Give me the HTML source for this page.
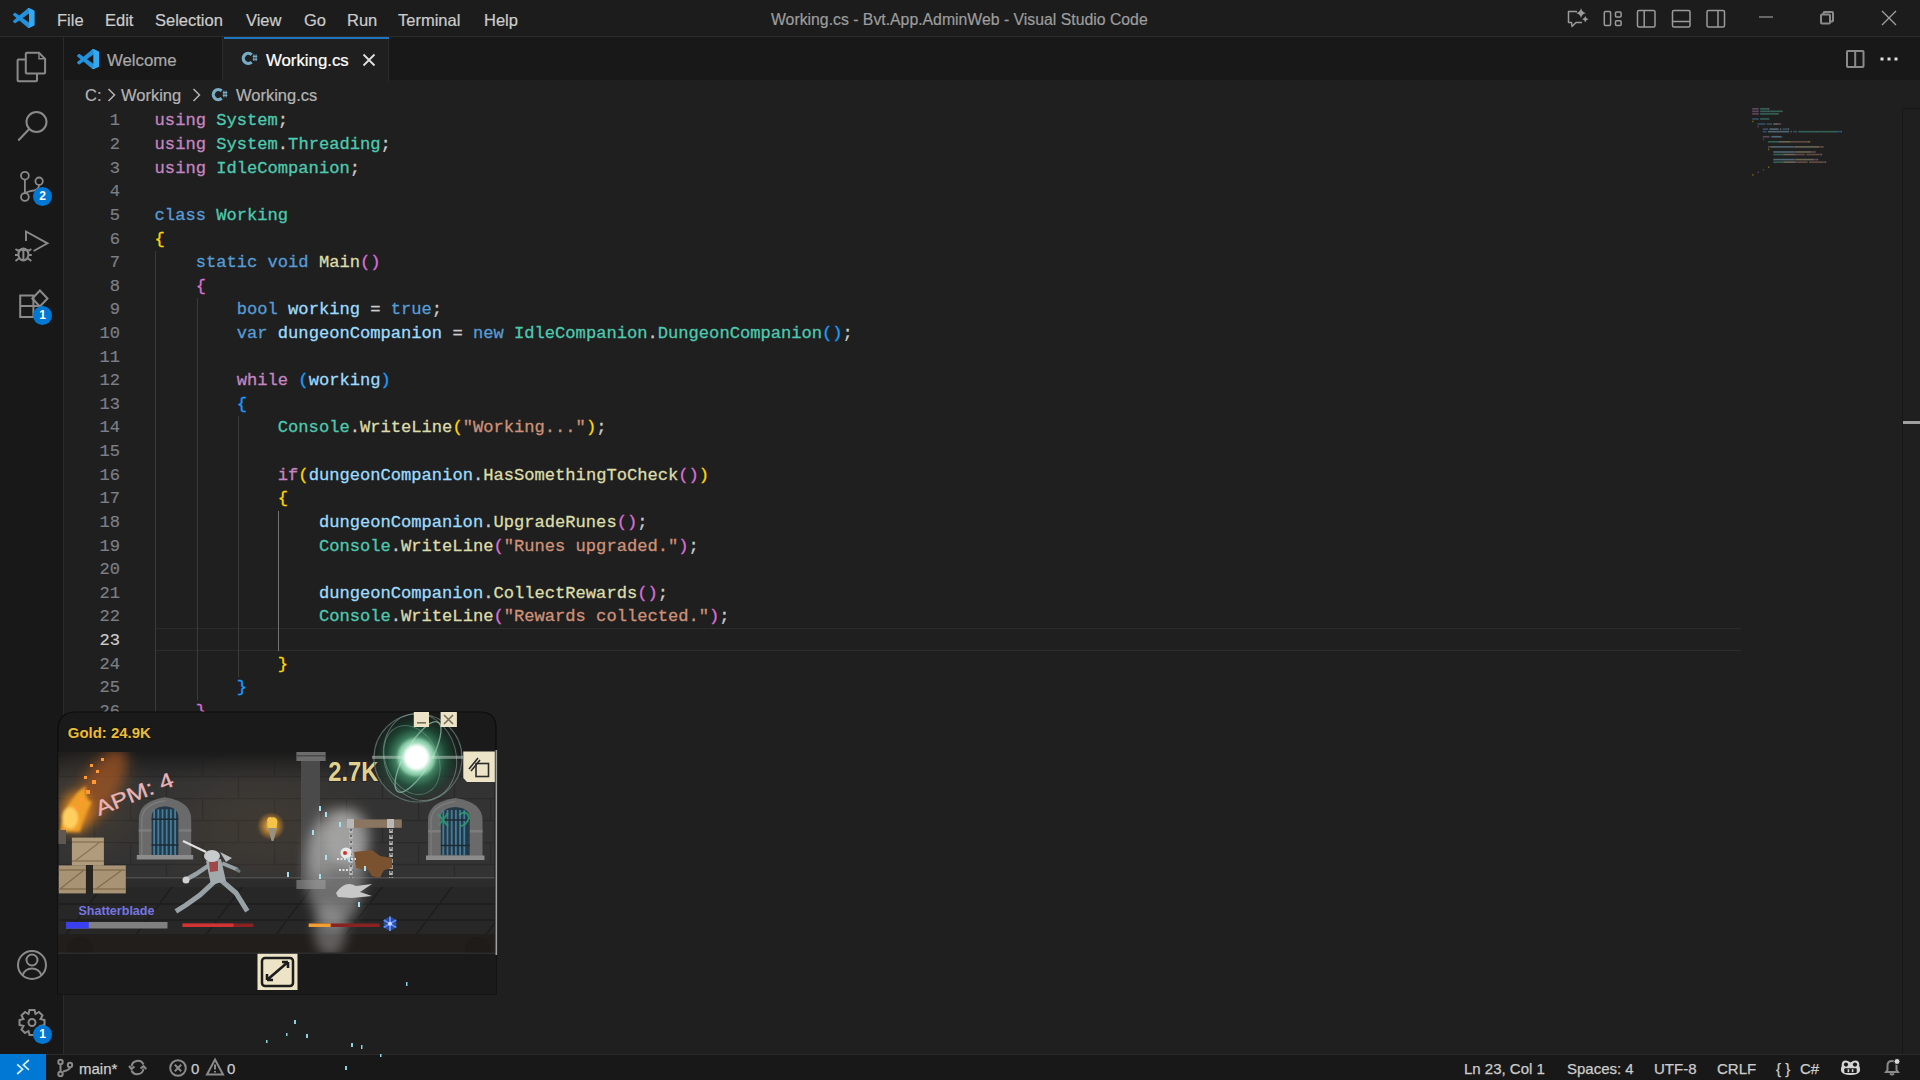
<!DOCTYPE html>
<html><head><meta charset="utf-8">
<style>
*{margin:0;padding:0;box-sizing:border-box}
html,body{width:1920px;height:1080px;overflow:hidden;background:#1f1f1f;font-family:"Liberation Sans",sans-serif;color:#cccccc}
.a{position:absolute}
svg{position:absolute;overflow:visible}
#title{left:0;top:0;width:1920px;height:37px;background:#1c1c1c;border-bottom:1px solid #2b2b2b}
.menu{position:absolute;top:10.5px;font-size:16.5px;color:#cccccc;white-space:pre;-webkit-text-stroke:0.2px currentColor}
#activity{left:0;top:37px;width:64px;height:1017px;background:#181818;border-right:1px solid #2b2b2b}
#tabs{left:64px;top:37px;width:1856px;height:44px;background:#181818;border-bottom:1px solid #2b2b2b}
#editor{left:64px;top:80px;width:1856px;height:974px;background:#1f1f1f}
#status{left:0;top:1054px;width:1920px;height:26px;background:#181818;border-top:1px solid #2b2b2b}
.code{position:absolute;left:154.6px;-webkit-text-stroke:0.3px currentColor;font-family:"Liberation Mono",monospace;font-size:17.11px;white-space:pre;height:23.65px;line-height:23.65px}
.ln{position:absolute;left:70px;-webkit-text-stroke:0.2px currentColor;width:50px;text-align:right;font-family:"Liberation Mono",monospace;font-size:17.08px;color:#7c7f86;height:23.65px;line-height:23.65px}
.ln.cur{color:#cccccc}
.k{color:#569cd6}.c{color:#c586c0}.t{color:#4ec9b0}.f{color:#dcdcaa}.v{color:#9cdcfe}.s{color:#ce9178}.p{color:#cccccc}
.b1{color:#ffd700}.b2{color:#da70d6}.b3{color:#179fff}
.guide{position:absolute;width:1px;background:#3a3a3a}
.st{position:absolute;top:1060px;font-size:15px;color:#cccccc;white-space:pre;-webkit-text-stroke:0.25px currentColor}
.ic{stroke:#8a8a8a;fill:none;stroke-width:2}
.badge{position:absolute;width:19px;height:19px;border-radius:50%;background:#0078d4;color:#fff;font-size:12px;font-weight:bold;text-align:center;line-height:19px}
.tabt{position:absolute;font-size:16.8px;white-space:pre;-webkit-text-stroke:0.2px currentColor}
.bc{position:absolute;top:86px;font-size:16.5px;color:#b4b4b4;white-space:pre;-webkit-text-stroke:0.2px currentColor}
</style></head><body>
<div id="title" class="a"></div>
<div id="activity" class="a"></div>
<div id="tabs" class="a"></div>
<div id="editor" class="a"></div>
<div id="status" class="a"></div>

<!-- title bar -->
<svg style="left:13.3px;top:8.3px" width="21.4" height="20" viewBox="0 0 100 100" preserveAspectRatio="none"><path d="M96.46 10.8 L75.86 0.87 C73.47-0.28 70.62 0.2 68.75 2.08 L29.35 38.04 L12.19 25.02 C10.59 23.81 8.36 23.91 6.88 25.26 L1.37 30.27 C-0.45 31.92-0.45 34.78 1.36 36.43 L16.24 50 L1.36 63.57 C-0.45 65.22-0.45 68.08 1.37 69.73 L6.88 74.74 C8.36 76.09 10.59 76.19 12.19 74.98 L29.35 61.960 L68.75 97.92 C70.62 99.8 73.47 100.28 75.86 99.13 L96.46 89.2 C98.62 88.16 100 85.97 100 83.57 V16.43 C100 14.03 98.62 11.84 96.46 10.8 Z M75.02 72.7 L45.11 50 L75.02 27.3 V72.7 Z" fill="#2392dd"/><path d="M68.75 2.08 C70.62 0.2 73.47-0.28 75.86 0.87 L96.46 10.8 C98.62 11.84 100 14.03 100 16.43 V83.57 C100 85.97 98.62 88.16 96.46 89.2 L75.86 99.13 C73.47 100.28 70.62 99.8 68.75 97.92 L75.02 90 V10 Z" fill="#34a8f0"/></svg>
<span class="menu" style="left:57px">File</span>
<span class="menu" style="left:105px">Edit</span>
<span class="menu" style="left:155px">Selection</span>
<span class="menu" style="left:246px">View</span>
<span class="menu" style="left:304px">Go</span>
<span class="menu" style="left:347px">Run</span>
<span class="menu" style="left:398px">Terminal</span>
<span class="menu" style="left:484px">Help</span>
<span class="menu" style="left:771px;font-size:15.8px;color:#9d9d9d;top:10.5px">Working.cs - Bvt.App.AdminWeb - Visual Studio Code</span>
<!-- title right icons -->
<svg style="left:0;top:0" width="1" height="1" viewBox="0 0 1 1">
 <g stroke="#9a9a9a" fill="none" stroke-width="1.5" stroke-linejoin="round">
  <path d="M1577 11.5 H1568.5 V22.5 H1571.5 L1572 26.5 L1576 22.5 H1582"/>
  <rect x="1604.3" y="11.5" width="6.3" height="14" rx="1.2"/>
  <rect x="1615.5" y="12" width="5.6" height="5" rx="1"/>
  <rect x="1615.5" y="20.8" width="5.6" height="4.8" rx="1"/>
  <rect x="1637.5" y="10.5" width="17.5" height="16.5" rx="1.5"/><path d="M1644.2 10.5 V27"/>
  <rect x="1672.5" y="10.5" width="17.5" height="16.5" rx="1.5"/><path d="M1672.5 21.5 H1690"/>
  <rect x="1707" y="10.5" width="17.5" height="16.5" rx="1.5"/><path d="M1718 10.5 V27"/>
 </g>
 <path d="M1581 8 Q1581.8 12.2 1586 13.1 Q1581.8 14 1581 18.2 Q1580.2 14 1576 13.1 Q1580.2 12.2 1581 8 Z" fill="#9a9a9a"/>
 <path d="M1585.3 16 Q1585.8 18.7 1588.5 19.2 Q1585.8 19.7 1585.3 22.4 Q1584.8 19.7 1582.1 19.2 Q1584.8 18.7 1585.3 16 Z" fill="#9a9a9a"/>
</svg>
<svg style="left:1759px;top:16px" width="16" height="2" viewBox="0 0 16 2"><path d="M0 1 H14" stroke="#9a9a9a" stroke-width="1.2"/></svg>
<svg style="left:1820px;top:11px" width="14" height="14" viewBox="0 0 14 14" class="ic" stroke="#9a9a9a" stroke-width="1.2"><rect x="1" y="3.5" width="9" height="9" rx="1"/><path d="M3.5 3.5 V2 Q3.5 1 4.5 1 H12 Q13 1 13 2 V9.5 Q13 10.5 12 10.5 H10"/></svg>
<svg style="left:1881px;top:10px" width="16" height="16" viewBox="0 0 16 16"><path d="M1 1 L15 15 M15 1 L1 15" stroke="#a0a0a0" stroke-width="1.3"/></svg>

<!-- activity bar icons -->
<svg style="left:0;top:0" width="64" height="1054" viewBox="0 0 64 1054" class="ic">
 <path d="M25.8 59.5 H18.5 Q17.6 59.5 17.6 60.5 V80.2 Q17.6 81.2 18.5 81.2 H36 Q37 81.2 37 80.2 V73.6"/>
 <path d="M26.8 52.7 H39 L45.1 58.8 V72.6 Q45.1 73.6 44.1 73.6 H26.8 Q25.8 73.6 25.8 72.6 V53.7 Q25.8 52.7 26.8 52.7 Z"/>
 <path d="M39 53 V58.8 H45" stroke-width="1.4"/>
 <circle cx="36.5" cy="122" r="10"/>
 <path d="M29.2 129 L18.3 140.5"/>
 <circle cx="24.9" cy="175.7" r="3.9" stroke-width="1.8"/><circle cx="39.1" cy="181.2" r="3.7" stroke-width="1.8"/><circle cx="24.9" cy="197" r="3.9" stroke-width="1.8"/>
 <path d="M24.9 179.6 V193.1 M39.1 184.9 Q39.1 190 31 191 L26 192.5" stroke-width="1.8"/>
 <path d="M26 241 V231.5 L47.5 243.3 L33.6 251" stroke-width="1.9"/>
 <ellipse cx="23.4" cy="254.5" rx="5" ry="6"/>
 <path d="M18.4 250 H28.4 M15.5 249 L18.4 251 M31.3 249 L28.4 251 M15 255 H18.4 M28.4 255 H31.8 M15.5 261 L18.7 258.5 M31.3 261 L28.1 258.5 M23.4 250 V260"/>
 <path d="M20.2 295.5 H33.4 V317 H20.2 Z M20.2 306 H33.4 M33.4 306 H42" />
 <path d="M39.9 290.5 L47.5 298.5 L39.9 306.5 L32.3 298.5 Z"/>
 <circle cx="32" cy="965" r="14"/>
 <circle cx="32" cy="960" r="5.5"/>
 <path d="M22.5 975.5 Q25 968.5 32 968.5 Q39 968.5 41.5 975.5"/>
 <path d="M29.5 1010 H34.5 L35.5 1014 L39 1012 L42.5 1015.5 L40.5 1019 L44.5 1020 V1025 L40.5 1026 L42.5 1029.5 L39 1033 L35.5 1031 L34.5 1035 H29.5 L28.5 1031 L25 1033 L21.5 1029.5 L23.5 1026 L19.5 1025 V1020 L23.5 1019 L21.5 1015.5 L25 1012 L28.5 1014 Z"/>
 <circle cx="32" cy="1022.5" r="3.5"/>
</svg>
<div class="badge" style="left:33px;top:187px">2</div>
<div class="badge" style="left:33px;top:306px">1</div>
<div class="badge" style="left:33px;top:1025px">1</div>

<!-- tabs -->
<div class="a" style="left:64px;top:37px;width:159px;height:43px;border-right:1px solid #2b2b2b;background:#181818"></div>
<div class="a" style="left:223px;top:37px;width:166px;height:44px;background:#1f1f1f;border-right:1px solid #2b2b2b"></div>
<div class="a" style="left:223.5px;top:37px;width:165.5px;height:1.6px;background:#1f74c0"></div>
<svg style="left:77px;top:49.3px" width="22" height="20.3" viewBox="0 0 100 100" preserveAspectRatio="none"><path d="M96.46 10.8 L75.86 0.87 C73.47-0.28 70.62 0.2 68.75 2.08 L29.35 38.04 L12.19 25.02 C10.59 23.81 8.36 23.91 6.88 25.26 L1.37 30.27 C-0.45 31.92-0.45 34.78 1.36 36.43 L16.24 50 L1.36 63.57 C-0.45 65.22-0.45 68.08 1.37 69.73 L6.88 74.74 C8.36 76.09 10.59 76.19 12.19 74.98 L29.35 61.960 L68.75 97.92 C70.62 99.8 73.47 100.28 75.86 99.13 L96.46 89.2 C98.62 88.16 100 85.97 100 83.57 V16.43 C100 14.03 98.62 11.84 96.46 10.8 Z M75.02 72.7 L45.11 50 L75.02 27.3 V72.7 Z" fill="#2392dd"/><path d="M68.75 2.08 C70.62 0.2 73.47-0.28 75.86 0.87 L96.46 10.8 C98.62 11.84 100 14.03 100 16.43 V83.57 C100 85.97 98.62 88.16 96.46 89.2 L75.86 99.13 C73.47 100.28 70.62 99.8 68.75 97.92 L75.02 90 V10 Z" fill="#34a8f0"/></svg>
<span class="tabt" style="left:107px;top:51.4px;color:#a8a8a8">Welcome</span>
<svg style="left:0;top:0" width="1" height="1" viewBox="0 0 1 1" overflow="visible"><g><path d="M251.65 54.68 A5.0 5.0 0 1 0 251.65 62.12" stroke="#78acc4" stroke-width="3.3" fill="none"/><path d="M253.9 54.6 V61.0 M256.1 54.6 V61.0 M252.7 56.4 H257.3 M252.7 59.2 H257.3" stroke="#78acc4" stroke-width="1.1"/></g></svg>
<span class="tabt" style="left:266px;top:51.4px;color:#ffffff">Working.cs</span>
<svg style="left:362px;top:54px" width="14" height="12" viewBox="0 0 14 12"><path d="M1.5 0.5 L12.5 11.5 M12.5 0.5 L1.5 11.5" stroke="#e0e0e0" stroke-width="1.8"/></svg>
<!-- tab bar right -->
<svg style="left:1846px;top:50px" width="19" height="18" viewBox="0 0 19 18" class="ic" stroke="#e0e0e0" stroke-width="1.5"><rect x="1" y="1" width="16.5" height="16" rx="0.8"/><path d="M9.2 1 V17"/></svg>
<svg style="left:1880px;top:57px" width="18" height="4" viewBox="0 0 18 4"><rect x="0.5" y="0.5" width="3" height="3" fill="#e0e0e0"/><rect x="7.5" y="0.5" width="3" height="3" fill="#e0e0e0"/><rect x="14.5" y="0.5" width="3" height="3" fill="#e0e0e0"/></svg>

<!-- breadcrumbs -->
<span class="bc" style="left:85px">C:</span>
<svg style="left:107px;top:88px" width="9" height="14" viewBox="0 0 9 14"><path d="M1.5 1 L7.5 7 L1.5 13" stroke="#b4b4b4" stroke-width="1.5" fill="none"/></svg>
<span class="bc" style="left:121px">Working</span>
<svg style="left:192px;top:88px" width="9" height="14" viewBox="0 0 9 14"><path d="M1.5 1 L7.5 7 L1.5 13" stroke="#b4b4b4" stroke-width="1.5" fill="none"/></svg>
<svg style="left:0;top:0" width="1" height="1" viewBox="0 0 1 1" overflow="visible"><g><path d="M221.65 90.88 A5.0 5.0 0 1 0 221.65 98.32" stroke="#78acc4" stroke-width="3.3" fill="none"/><path d="M223.9 90.8 V97.2 M226.1 90.8 V97.2 M222.7 92.6 H227.3 M222.7 95.4 H227.3" stroke="#78acc4" stroke-width="1.1"/></g></svg>
<span class="bc" style="left:236px">Working.cs</span>

<!-- current line + guides -->
<div class="a" style="left:154px;top:628px;width:1587px;height:23px;border-top:1.5px solid #2c2c2c;border-bottom:1.5px solid #2c2c2c"></div>
<div class="guide" style="left:155px;top:251px;height:462px"></div>
<div class="guide" style="left:197px;top:298px;height:402px"></div>
<div class="guide" style="left:238px;top:416px;height:261px"></div>
<div class="guide" style="left:278px;top:511px;height:140px;background:#707070"></div>

<div class="ln" style="top:109.40px">1</div>
<div class="code" style="top:109.40px"><span class="c">using</span><span class="p"> </span><span class="t">System</span><span class="p">;</span></div>
<div class="ln" style="top:133.02px">2</div>
<div class="code" style="top:133.02px"><span class="c">using</span><span class="p"> </span><span class="t">System</span><span class="p">.</span><span class="t">Threading</span><span class="p">;</span></div>
<div class="ln" style="top:156.64px">3</div>
<div class="code" style="top:156.64px"><span class="c">using</span><span class="p"> </span><span class="t">IdleCompanion</span><span class="p">;</span></div>
<div class="ln" style="top:180.26px">4</div>
<div class="ln" style="top:203.88px">5</div>
<div class="code" style="top:203.88px"><span class="k">class</span><span class="p"> </span><span class="t">Working</span></div>
<div class="ln" style="top:227.50px">6</div>
<div class="code" style="top:227.50px"><span class="b1">{</span></div>
<div class="ln" style="top:251.12px">7</div>
<div class="code" style="top:251.12px"><span class="p">    </span><span class="k">static</span><span class="p"> </span><span class="k">void</span><span class="p"> </span><span class="f">Main</span><span class="b2">()</span></div>
<div class="ln" style="top:274.74px">8</div>
<div class="code" style="top:274.74px"><span class="p">    </span><span class="b2">{</span></div>
<div class="ln" style="top:298.36px">9</div>
<div class="code" style="top:298.36px"><span class="p">        </span><span class="k">bool</span><span class="p"> </span><span class="v">working</span><span class="p"> = </span><span class="k">true</span><span class="p">;</span></div>
<div class="ln" style="top:321.98px">10</div>
<div class="code" style="top:321.98px"><span class="p">        </span><span class="k">var</span><span class="p"> </span><span class="v">dungeonCompanion</span><span class="p"> = </span><span class="k">new</span><span class="p"> </span><span class="t">IdleCompanion</span><span class="p">.</span><span class="t">DungeonCompanion</span><span class="b3">()</span><span class="p">;</span></div>
<div class="ln" style="top:345.60px">11</div>
<div class="ln" style="top:369.22px">12</div>
<div class="code" style="top:369.22px"><span class="p">        </span><span class="c">while</span><span class="p"> </span><span class="b3">(</span><span class="v">working</span><span class="b3">)</span></div>
<div class="ln" style="top:392.84px">13</div>
<div class="code" style="top:392.84px"><span class="p">        </span><span class="b3">{</span></div>
<div class="ln" style="top:416.46px">14</div>
<div class="code" style="top:416.46px"><span class="p">            </span><span class="t">Console</span><span class="p">.</span><span class="f">WriteLine</span><span class="b1">(</span><span class="s">&quot;Working...&quot;</span><span class="b1">)</span><span class="p">;</span></div>
<div class="ln" style="top:440.08px">15</div>
<div class="ln" style="top:463.70px">16</div>
<div class="code" style="top:463.70px"><span class="p">            </span><span class="c">if</span><span class="b1">(</span><span class="v">dungeonCompanion</span><span class="p">.</span><span class="f">HasSomethingToCheck</span><span class="b2">()</span><span class="b1">)</span></div>
<div class="ln" style="top:487.32px">17</div>
<div class="code" style="top:487.32px"><span class="p">            </span><span class="b1">{</span></div>
<div class="ln" style="top:510.94px">18</div>
<div class="code" style="top:510.94px"><span class="p">                </span><span class="v">dungeonCompanion</span><span class="p">.</span><span class="f">UpgradeRunes</span><span class="b2">()</span><span class="p">;</span></div>
<div class="ln" style="top:534.56px">19</div>
<div class="code" style="top:534.56px"><span class="p">                </span><span class="t">Console</span><span class="p">.</span><span class="f">WriteLine</span><span class="b2">(</span><span class="s">&quot;Runes upgraded.&quot;</span><span class="b2">)</span><span class="p">;</span></div>
<div class="ln" style="top:558.18px">20</div>
<div class="ln" style="top:581.80px">21</div>
<div class="code" style="top:581.80px"><span class="p">                </span><span class="v">dungeonCompanion</span><span class="p">.</span><span class="f">CollectRewards</span><span class="b2">()</span><span class="p">;</span></div>
<div class="ln" style="top:605.42px">22</div>
<div class="code" style="top:605.42px"><span class="p">                </span><span class="t">Console</span><span class="p">.</span><span class="f">WriteLine</span><span class="b2">(</span><span class="s">&quot;Rewards collected.&quot;</span><span class="b2">)</span><span class="p">;</span></div>
<div class="ln cur" style="top:629.04px">23</div>
<div class="ln" style="top:652.66px">24</div>
<div class="code" style="top:652.66px"><span class="p">            </span><span class="b1">}</span></div>
<div class="ln" style="top:676.28px">25</div>
<div class="code" style="top:676.28px"><span class="p">        </span><span class="b3">}</span></div>
<div class="ln" style="top:699.90px">26</div>
<div class="code" style="top:699.90px"><span class="p">    </span><span class="b2">}</span></div>
<div class="ln" style="top:723.52px">27</div>
<div class="code" style="top:723.52px"><span class="b1">}</span></div>

<!-- status bar -->
<div class="a" style="left:0;top:1054px;width:46px;height:26px;background:#0078d4"></div>
<svg style="left:0;top:0" width="1" height="1" viewBox="0 0 1 1"><path d="M17.2 1064.3 L22.6 1069.2 L17.2 1074 M28.9 1060 L23.4 1064.9 L28.9 1069.8" stroke="#d8f0ff" stroke-width="1.7" fill="none"/></svg>
<svg style="left:57px;top:1059px" width="17" height="18" viewBox="0 0 17 18" class="ic" stroke="#c0c0c0" stroke-width="1.5"><circle cx="3.5" cy="3" r="2.2"/><circle cx="3.5" cy="15" r="2.2"/><circle cx="13" cy="6" r="2.2"/><path d="M3.5 5.2 V12.8 M13 8.2 Q13 11 6 12.5"/></svg>
<span class="st" style="left:79px">main*</span>
<svg style="left:0;top:0" width="1" height="1" viewBox="0 0 1 1" class="ic" stroke="#c8c8c8" stroke-width="1.7"><path d="M131.5 1066.5 A6.3 6.3 0 0 1 143.5 1064.5 M143.5 1068.5 A6.3 6.3 0 0 1 131.5 1070.5"/><path d="M129 1066 L131.5 1069 L134.5 1066.5 M146.3 1069 L143.5 1066 L140.5 1068.5"/></svg>
<svg style="left:169px;top:1059px" width="18" height="18" viewBox="0 0 18 18" class="ic" stroke="#c0c0c0" stroke-width="1.5"><circle cx="9" cy="9" r="7.8"/><path d="M5.8 5.8 L12.2 12.2 M12.2 5.8 L5.8 12.2"/></svg>
<span class="st" style="left:191px">0</span>
<svg style="left:206px;top:1058px" width="18" height="18" viewBox="0 0 18 18" class="ic" stroke="#c0c0c0" stroke-width="1.5"><path d="M9 1.5 L17 16.5 H1 Z M9 6.5 V11.5 M9 13 V14.5"/></svg>
<span class="st" style="left:227px">0</span>
<span class="st" style="left:1464px">Ln 23, Col 1</span>
<span class="st" style="left:1567px">Spaces: 4</span>
<span class="st" style="left:1654px">UTF-8</span>
<span class="st" style="left:1717px">CRLF</span>
<span class="st" style="left:1776px">{ }</span>
<span class="st" style="left:1800px">C#</span>
<svg style="left:0;top:0" width="1" height="1" viewBox="0 0 1 1">
 <path d="M1850.5 1062.5 Q1847 1059.8 1844 1060.8 Q1841.2 1062 1841.8 1066 Q1840.5 1068 1841 1071 Q1842.5 1075 1850.5 1075 Q1858.5 1075 1860 1071 Q1860.5 1068 1859.2 1066 Q1859.8 1062 1857 1060.8 Q1854 1059.8 1850.5 1062.5 Z" fill="#d4d4d4"/>
 <circle cx="1846" cy="1064.6" r="2.1" fill="#181818"/><circle cx="1855" cy="1064.6" r="2.1" fill="#181818"/>
 <rect x="1844.3" y="1068.3" width="12.4" height="4.6" rx="1" fill="#181818"/>
 <rect x="1847.6" y="1069.2" width="1.6" height="3" fill="#d4d4d4"/><rect x="1851.8" y="1069.2" width="1.6" height="3" fill="#d4d4d4"/>
</svg>
<svg style="left:1883px;top:1058px" width="18" height="18" viewBox="0 0 18 18" class="ic" stroke="#c8c8c8" stroke-width="1.5"><path d="M3 14 H15 L13.5 12 V7.5 Q13.5 3 9 3 Q4.5 3 4.5 7.5 V12 Z M7 15.5 Q9 17.5 11 15.5"/><circle cx="14" cy="3.5" r="3" fill="#d8d8d8" stroke="#181818" stroke-width="1"/></svg>

<!-- minimap & scrollbar -->
<svg style="left:0;top:0" width="1920" height="200" viewBox="0 0 1920 200" opacity="0.38"><rect x="1752.20" y="108.00" width="6.60" height="1.6" fill="#c586c0"/><rect x="1760.12" y="108.00" width="7.92" height="1.6" fill="#4ec9b0"/><rect x="1768.04" y="108.00" width="1.32" height="1.6" fill="#cccccc"/><rect x="1752.20" y="110.54" width="6.60" height="1.6" fill="#c586c0"/><rect x="1760.12" y="110.54" width="7.92" height="1.6" fill="#4ec9b0"/><rect x="1768.04" y="110.54" width="1.32" height="1.6" fill="#cccccc"/><rect x="1769.36" y="110.54" width="11.88" height="1.6" fill="#4ec9b0"/><rect x="1781.24" y="110.54" width="1.32" height="1.6" fill="#cccccc"/><rect x="1752.20" y="113.08" width="6.60" height="1.6" fill="#c586c0"/><rect x="1760.12" y="113.08" width="17.16" height="1.6" fill="#4ec9b0"/><rect x="1777.28" y="113.08" width="1.32" height="1.6" fill="#cccccc"/><rect x="1752.20" y="118.16" width="6.60" height="1.6" fill="#569cd6"/><rect x="1760.12" y="118.16" width="9.24" height="1.6" fill="#4ec9b0"/><rect x="1752.20" y="120.70" width="1.32" height="1.6" fill="#ffd700"/><rect x="1757.48" y="123.24" width="7.92" height="1.6" fill="#569cd6"/><rect x="1766.72" y="123.24" width="5.28" height="1.6" fill="#569cd6"/><rect x="1773.32" y="123.24" width="5.28" height="1.6" fill="#dcdcaa"/><rect x="1778.60" y="123.24" width="2.64" height="1.6" fill="#da70d6"/><rect x="1757.48" y="125.78" width="1.32" height="1.6" fill="#da70d6"/><rect x="1762.76" y="128.32" width="5.28" height="1.6" fill="#569cd6"/><rect x="1769.36" y="128.32" width="9.24" height="1.6" fill="#9cdcfe"/><rect x="1779.92" y="128.32" width="1.32" height="1.6" fill="#cccccc"/><rect x="1782.56" y="128.32" width="5.28" height="1.6" fill="#569cd6"/><rect x="1787.84" y="128.32" width="1.32" height="1.6" fill="#cccccc"/><rect x="1762.76" y="130.86" width="3.96" height="1.6" fill="#569cd6"/><rect x="1768.04" y="130.86" width="21.12" height="1.6" fill="#9cdcfe"/><rect x="1790.48" y="130.86" width="1.32" height="1.6" fill="#cccccc"/><rect x="1793.12" y="130.86" width="3.96" height="1.6" fill="#569cd6"/><rect x="1798.40" y="130.86" width="17.16" height="1.6" fill="#4ec9b0"/><rect x="1815.56" y="130.86" width="1.32" height="1.6" fill="#cccccc"/><rect x="1816.88" y="130.86" width="21.12" height="1.6" fill="#4ec9b0"/><rect x="1838.00" y="130.86" width="2.64" height="1.6" fill="#179fff"/><rect x="1840.64" y="130.86" width="1.32" height="1.6" fill="#cccccc"/><rect x="1762.76" y="135.94" width="6.60" height="1.6" fill="#c586c0"/><rect x="1770.68" y="135.94" width="1.32" height="1.6" fill="#179fff"/><rect x="1772.00" y="135.94" width="9.24" height="1.6" fill="#9cdcfe"/><rect x="1781.24" y="135.94" width="1.32" height="1.6" fill="#179fff"/><rect x="1762.76" y="138.48" width="1.32" height="1.6" fill="#179fff"/><rect x="1768.04" y="141.02" width="9.24" height="1.6" fill="#4ec9b0"/><rect x="1777.28" y="141.02" width="1.32" height="1.6" fill="#cccccc"/><rect x="1778.60" y="141.02" width="11.88" height="1.6" fill="#dcdcaa"/><rect x="1790.48" y="141.02" width="1.32" height="1.6" fill="#ffd700"/><rect x="1791.80" y="141.02" width="15.84" height="1.6" fill="#ce9178"/><rect x="1807.64" y="141.02" width="1.32" height="1.6" fill="#ffd700"/><rect x="1808.96" y="141.02" width="1.32" height="1.6" fill="#cccccc"/><rect x="1768.04" y="146.10" width="2.64" height="1.6" fill="#c586c0"/><rect x="1770.68" y="146.10" width="1.32" height="1.6" fill="#ffd700"/><rect x="1772.00" y="146.10" width="21.12" height="1.6" fill="#9cdcfe"/><rect x="1793.12" y="146.10" width="1.32" height="1.6" fill="#cccccc"/><rect x="1794.44" y="146.10" width="25.08" height="1.6" fill="#dcdcaa"/><rect x="1819.52" y="146.10" width="2.64" height="1.6" fill="#da70d6"/><rect x="1822.16" y="146.10" width="1.32" height="1.6" fill="#ffd700"/><rect x="1768.04" y="148.64" width="1.32" height="1.6" fill="#ffd700"/><rect x="1773.32" y="151.18" width="21.12" height="1.6" fill="#9cdcfe"/><rect x="1794.44" y="151.18" width="1.32" height="1.6" fill="#cccccc"/><rect x="1795.76" y="151.18" width="15.84" height="1.6" fill="#dcdcaa"/><rect x="1811.60" y="151.18" width="2.64" height="1.6" fill="#da70d6"/><rect x="1814.24" y="151.18" width="1.32" height="1.6" fill="#cccccc"/><rect x="1773.32" y="153.72" width="9.24" height="1.6" fill="#4ec9b0"/><rect x="1782.56" y="153.72" width="1.32" height="1.6" fill="#cccccc"/><rect x="1783.88" y="153.72" width="11.88" height="1.6" fill="#dcdcaa"/><rect x="1795.76" y="153.72" width="1.32" height="1.6" fill="#da70d6"/><rect x="1797.08" y="153.72" width="7.92" height="1.6" fill="#ce9178"/><rect x="1806.32" y="153.72" width="13.20" height="1.6" fill="#ce9178"/><rect x="1819.52" y="153.72" width="1.32" height="1.6" fill="#da70d6"/><rect x="1820.84" y="153.72" width="1.32" height="1.6" fill="#cccccc"/><rect x="1773.32" y="158.80" width="21.12" height="1.6" fill="#9cdcfe"/><rect x="1794.44" y="158.80" width="1.32" height="1.6" fill="#cccccc"/><rect x="1795.76" y="158.80" width="18.48" height="1.6" fill="#dcdcaa"/><rect x="1814.24" y="158.80" width="2.64" height="1.6" fill="#da70d6"/><rect x="1816.88" y="158.80" width="1.32" height="1.6" fill="#cccccc"/><rect x="1773.32" y="161.34" width="9.24" height="1.6" fill="#4ec9b0"/><rect x="1782.56" y="161.34" width="1.32" height="1.6" fill="#cccccc"/><rect x="1783.88" y="161.34" width="11.88" height="1.6" fill="#dcdcaa"/><rect x="1795.76" y="161.34" width="1.32" height="1.6" fill="#da70d6"/><rect x="1797.08" y="161.34" width="10.56" height="1.6" fill="#ce9178"/><rect x="1808.96" y="161.34" width="14.52" height="1.6" fill="#ce9178"/><rect x="1823.48" y="161.34" width="1.32" height="1.6" fill="#da70d6"/><rect x="1824.80" y="161.34" width="1.32" height="1.6" fill="#cccccc"/><rect x="1768.04" y="166.42" width="1.32" height="1.6" fill="#ffd700"/><rect x="1762.76" y="168.96" width="1.32" height="1.6" fill="#179fff"/><rect x="1757.48" y="171.50" width="1.32" height="1.6" fill="#da70d6"/><rect x="1752.20" y="174.04" width="1.32" height="1.6" fill="#ffd700"/></svg>
<div class="a" style="left:1901.5px;top:108px;width:1.8px;height:946px;background:#171717"></div>
<div class="a" style="left:1902px;top:107.5px;width:18px;height:1.5px;background:#171717"></div>
<div class="a" style="left:1903px;top:421px;width:17px;height:3px;background:#a0a0a0"></div>

<svg style="left:40px;top:700px" width="480" height="380" viewBox="40 700 480 380">
<defs>
 <radialGradient id="warm1" cx="0.5" cy="0.5" r="0.5"><stop offset="0" stop-color="#5e4a34" stop-opacity="0.4"/><stop offset="1" stop-color="#5e4a34" stop-opacity="0"/></radialGradient>
 <radialGradient id="fireg" cx="0.5" cy="0.5" r="0.5"><stop offset="0" stop-color="#ffb030" stop-opacity="0.95"/><stop offset="0.45" stop-color="#e07a20" stop-opacity="0.7"/><stop offset="1" stop-color="#c05010" stop-opacity="0"/></radialGradient>
 <radialGradient id="orbg" cx="0.5" cy="0.5" r="0.5"><stop offset="0" stop-color="#ffffff"/><stop offset="0.25" stop-color="#e0fff0"/><stop offset="0.4" stop-color="#60c090" stop-opacity="0.9"/><stop offset="0.7" stop-color="#1f5a40" stop-opacity="0.85"/><stop offset="1" stop-color="#163a2c" stop-opacity="0.2"/></radialGradient>
 <radialGradient id="smoke" cx="0.5" cy="0.5" r="0.5"><stop offset="0" stop-color="#c8c8c8" stop-opacity="0.8"/><stop offset="0.6" stop-color="#a0a0a0" stop-opacity="0.5"/><stop offset="1" stop-color="#808080" stop-opacity="0"/></radialGradient>
 <radialGradient id="torchg" cx="0.5" cy="0.5" r="0.5"><stop offset="0" stop-color="#ffe080"/><stop offset="0.5" stop-color="#f0a030" stop-opacity="0.6"/><stop offset="1" stop-color="#f0a030" stop-opacity="0"/></radialGradient>
 <pattern id="bricks" x="58" y="754" width="72" height="44" patternUnits="userSpaceOnUse">
  <rect width="72" height="44" fill="#333333"/>
  <path d="M0 0.5 H72 M0 22.5 H72 M0.5 0 V22 M36.5 22 V44" stroke="#2a2a2a" stroke-width="1.6"/>
 </pattern>
 <linearGradient id="topdark" x1="0" y1="0" x2="0" y2="1"><stop offset="0" stop-color="#181818" stop-opacity="0.9"/><stop offset="1" stop-color="#181818" stop-opacity="0"/></linearGradient>
 <radialGradient id="vign" cx="0.5" cy="0.55" r="0.6"><stop offset="0.5" stop-color="#000" stop-opacity="0"/><stop offset="1" stop-color="#000" stop-opacity="0.35"/></radialGradient>
 <filter id="blur3" x="-50%" y="-50%" width="200%" height="200%"><feGaussianBlur stdDeviation="6"/></filter><filter id="blur1" x="-50%" y="-50%" width="200%" height="200%"><feGaussianBlur stdDeviation="1.5"/></filter>
 <clipPath id="scene"><rect x="58.5" y="752" width="436" height="201"/></clipPath>
</defs>
<!-- window body -->
<path d="M58 730 Q58 712 76 712 H480 Q496 712 496 728 V994 H58 Z" fill="#1a1a1a" stroke="#0c0c0c" stroke-width="1.2"/>
<rect x="58" y="953" width="438" height="41" fill="#1a1a1a"/>
<g clip-path="url(#scene)">
 <rect x="58" y="752" width="438" height="201" fill="url(#bricks)"/>
 <rect x="58" y="752" width="438" height="30" fill="url(#topdark)"/>
 <ellipse cx="260" cy="825" rx="120" ry="75" fill="url(#warm1)" opacity="0.8"/>
 <ellipse cx="95" cy="800" rx="60" ry="70" fill="url(#warm1)"/>
 <!-- ledge & floor -->
 <rect x="58" y="877" width="438" height="10" fill="#2c2c2c"/>
 <rect x="58" y="877" width="438" height="1.5" fill="#4c4c4c"/>
 <rect x="58" y="887" width="438" height="53" fill="#272727"/>
 <path d="M62 940 L102 887 M132 940 L172 887 M202 940 L242 887 M272 940 L312 887 M342 940 L382 887 M412 940 L452 887 M482 940 L522 887 M58 904 H496 M58 920 H496" stroke="#1e1e1e" stroke-width="1.6"/>
 <rect x="58" y="934" width="438" height="19" fill="#221e1b"/>
 <circle cx="80" cy="950" r="13" fill="#1e1b19"/>
 <circle cx="478" cy="950" r="13" fill="#1e1b19"/>
 <!-- left window -->
 <path d="M138.8 859 V819.2 Q138.8 801.2 165.0 797.2 Q191.2 801.2 191.2 819.2 V859 Z" fill="#6a6a6a"/>
 <path d="M141.8 859 V820.2 Q141.8 804.2 165.0 800.7" fill="none" stroke="#7a7a7a" stroke-width="1.5"/>
 <rect x="138.8" y="829.2" width="52.39999999999998" height="2.5" fill="#7c7c7c"/>
 <path d="M151.60000000000002 855 V817.2 Q151.60000000000002 807.2 165.0 806.2 Q178.39999999999998 807.2 178.39999999999998 817.2 V855 Z" fill="#243846"/>
 <path d="M154.1 809.2 V855 M158.3 809.2 V855 M162.5 809.2 V855 M166.7 809.2 V855 M170.9 809.2 V855 M175.1 809.2 V855" stroke="#4a88a8" stroke-width="1.8" opacity="0.85"/>
 <path d="M151.60000000000002 819.2 H178.39999999999998 M151.60000000000002 845 H178.39999999999998" stroke="#1c2a34" stroke-width="1.5"/>
 <rect x="136.8" y="855" width="56.39999999999998" height="4.5" fill="#8c8c8c"/>
 <!-- right window -->
 <path d="M428 859.5 V820 Q428 802 455.25 798 Q482.5 802 482.5 820 V859.5 Z" fill="#6a6a6a"/>
 <path d="M431 859.5 V821 Q431 805 455.25 801.5" fill="none" stroke="#7a7a7a" stroke-width="1.5"/>
 <rect x="428" y="830" width="54.5" height="2.5" fill="#7c7c7c"/>
 <path d="M440.8 855.5 V818 Q440.8 808 455.25 807 Q469.7 808 469.7 818 V855.5 Z" fill="#243846"/>
 <path d="M443.3 810 V855.5 M447.5 810 V855.5 M451.7 810 V855.5 M455.9 810 V855.5 M460.1 810 V855.5 M464.3 810 V855.5" stroke="#4a88a8" stroke-width="1.8" opacity="0.85"/>
 <path d="M440.8 820 H469.7 M440.8 845.5 H469.7" stroke="#1c2a34" stroke-width="1.5"/>
 <rect x="426" y="855.5" width="58.5" height="4.5" fill="#8c8c8c"/>
 <path d="M438 814 L448 826 M448 813 L439 825 M459 815 Q467 809 469 818 Q466 826 460 826" stroke="#2aa070" stroke-width="2" fill="none" opacity="0.85"/>
 <!-- torch -->
 <ellipse cx="271" cy="826" rx="14" ry="14" fill="url(#torchg)"/>
 <path d="M267 820 Q268 816 272 817.5 Q276 816 277.5 821 L276.5 828 H268 Z" fill="#f4c448"/>
 <path d="M268 828 H277 L273.5 841 H271.5 Z" fill="#9a9080"/>
 <!-- fire left -->
 <g filter="url(#blur3)">
  <ellipse cx="100" cy="788" rx="18" ry="44" fill="#b85a20" opacity="0.6" transform="rotate(30 100 788)"/>
  <ellipse cx="76" cy="812" rx="15" ry="20" fill="#e88a20" opacity="0.85"/>
 </g>
 <g filter="url(#blur1)">
  <path d="M60 832 Q62 812 72 800 Q78 790 86 786 Q84 800 92 802 Q84 816 80 832 Z" fill="#f0a028"/>
  <ellipse cx="70" cy="818" rx="8" ry="11" fill="#ffd060"/>
 </g>
 <g fill="#ff9a30"><rect x="86" y="790" width="4" height="4"/><rect x="80" y="798" width="4" height="4"/><rect x="92" y="780" width="4" height="4"/><rect x="96" y="770" width="3" height="3"/><rect x="90" y="764" width="3" height="3"/><rect x="101" y="758" width="3" height="3"/><rect x="84" y="776" width="3" height="3"/><rect x="76" y="806" width="4" height="4"/></g>
 <rect x="58" y="830" width="8" height="14" fill="#5e5850"/>
<!-- crates -->
 <rect x="71.9" y="837.6" width="32" height="28" fill="#b09c7c"/>
 <path d="M72 842 H104 M72 861 H104 M75 861 L100 842" stroke="#8a7658" stroke-width="1.5"/>
 <rect x="58.6" y="865.4" width="27.3" height="28" fill="#a89474"/>
 <rect x="92.8" y="865.4" width="33" height="28" fill="#a89474"/>
 <path d="M58 870 H86 M58 889 H86 M60 889 L84 870 M93 870 H126 M93 889 H126 M96 889 L122 870" stroke="#84704f" stroke-width="1.5"/>
 <rect x="86" y="865" width="7" height="29" fill="#2a2420"/>
 <!-- pillar -->
 <rect x="296.4" y="750" width="29.2" height="11" fill="#6c6c6c"/>
 <rect x="296.4" y="755" width="29.2" height="1.5" fill="#4a4a4a"/>
 <rect x="301" y="761" width="19" height="120" fill="#4a4a4a"/>
 <rect x="296.4" y="880" width="29.2" height="9" fill="#666"/>
 <!-- smoke -->
 <g filter="url(#blur3)">
 <ellipse cx="335" cy="868" rx="30" ry="60" fill="#a8a8a8" opacity="0.55"/>
 <ellipse cx="348" cy="838" rx="22" ry="30" fill="#c4c4c4" opacity="0.55"/>
 <ellipse cx="322" cy="850" rx="14" ry="26" fill="#b0b0b0" opacity="0.45"/>
 <ellipse cx="330" cy="930" rx="16" ry="26" fill="#a0a0a0" opacity="0.5"/>
 </g>
<!-- beam & chains -->
 <rect x="347.8" y="819.4" width="54" height="8.4" fill="#8a7560"/>
 <rect x="347" y="819" width="7" height="9" fill="#b8b8b8"/><rect x="387" y="819" width="7" height="9" fill="#b8b8b8"/>
 <path d="M351 829 V878 M391 829 V878" stroke="#b8b8b8" stroke-width="3.5" stroke-dasharray="4 2"/>
 <path d="M351 829 V878 M391 829 V878" stroke="#3a3a3a" stroke-width="1.2" stroke-dasharray="2 4"/>
 <!-- enemy -->
 <path d="M354 852 L372 850 L380 856 L392 858 L392 868 L384 870 L380 878 L372 876 L368 870 L356 868 Z" fill="#7a5230"/>
 <circle cx="346" cy="853" r="5.5" fill="#e8e8e8"/><circle cx="345" cy="853" r="2" fill="#d03030"/>
 <path d="M337 859 H356 M339 870 H353" stroke="#e0e0e0" stroke-width="2" stroke-dasharray="2 1.5"/>
 <path d="M336 893 Q345 880 356 886 L372 884 L360 892 L372 896 L352 898 L338 897 Z" fill="#c8c8c8"/>
 <!-- character -->
 <g stroke="#98a2a6" stroke-linecap="square" fill="none">
  <path d="M213 883 L200 895 L186 905 L178 910" stroke-width="5"/>
  <path d="M222 881 L236 893 L246 909" stroke-width="5"/>
  <path d="M208 866 L196 874 L187 879" stroke-width="4.5"/>
  <path d="M224 864 L236 869" stroke-width="4"/>
 </g>
 <path d="M206 861 L221 859 L226 881 L211 885 Z" fill="#a2aaae"/>
 <path d="M209 862 L218 861 L218 871 L210 872 Z" fill="#a04848"/>
 <ellipse cx="212" cy="856" rx="8" ry="6" fill="#c8cbcd"/>
 <path d="M220 852 L232 858 L226 862 Z" fill="#b8bcbe"/>
 <circle cx="186" cy="880" r="3.5" fill="#d0d0d0"/>
 <path d="M183 841 L206 852" stroke="#e0e0e0" stroke-width="2.2"/>
 <path d="M236 869 L240 872" stroke="#70787c" stroke-width="3"/>
<!-- sparkles -->
 <g fill="#a8e0f0"><rect x="319" y="806" width="2" height="5"/><rect x="325" y="812" width="2" height="5"/><rect x="339" y="822" width="2" height="5"/><rect x="312" y="830" width="2" height="5"/><rect x="325" y="855" width="2" height="5"/><rect x="348" y="857" width="2" height="5"/><rect x="364" y="866" width="2" height="5"/><rect x="319" y="874" width="2" height="5"/><rect x="287" y="872" width="2" height="5"/><rect x="358" y="902" width="2" height="5"/></g>
 <!-- bars & name -->
 <rect x="66" y="922" width="101.5" height="6.5" fill="#808080"/>
 <rect x="66" y="922" width="22.8" height="6.5" fill="#3a40f0"/>
 <rect x="182.5" y="923.5" width="71" height="3.5" fill="#8a2222"/>
 <rect x="182.5" y="923.5" width="51" height="3.5" fill="#d03434"/>
 <rect x="308.7" y="923.5" width="71" height="3.5" fill="#8a2222"/>
 <rect x="308.7" y="923.5" width="22" height="3.5" fill="#f0a030"/>
 <circle cx="390" cy="923.7" r="6.5" fill="#3a6ae8" opacity="0.55"/>
 <g stroke="#5a8cff" stroke-width="2"><path d="M390 916.5 V931 M383.7 920 L396.3 927.5 M383.7 927.5 L396.3 920"/></g>
 <circle cx="390" cy="923.7" r="2" fill="#c8d8ff"/>
</g>
<rect x="58" y="952.5" width="438" height="1.5" fill="#2c2c2c"/>
<!-- right edge line -->
<rect x="495.5" y="750" width="1.6" height="205" fill="#a0a0a0"/>
<!-- texts -->
<text x="67.8" y="738" font-family="Liberation Sans" font-weight="bold" font-size="13.8" fill="#e6be3c" stroke="#1a1400" stroke-width="1.6" paint-order="stroke" textLength="83" lengthAdjust="spacingAndGlyphs">Gold: 24.9K</text>
<text x="328.3" y="780.5" font-family="Liberation Sans" font-weight="bold" font-size="27" fill="#e0d28e" stroke="#222" stroke-width="1.5" paint-order="stroke" textLength="50" lengthAdjust="spacingAndGlyphs">2.7K</text>
<text x="0" y="0" font-family="Liberation Sans" font-size="21" fill="#e8b4b8" stroke="#e8b4b8" stroke-width="0.3" transform="translate(99 816) rotate(-22)" textLength="82" lengthAdjust="spacingAndGlyphs">APM: 4</text>
<text x="78.5" y="915" font-family="Liberation Sans" font-weight="bold" font-size="12.4" fill="#7676e0" textLength="76" lengthAdjust="spacingAndGlyphs">Shatterblade</text>
<!-- orb -->
<circle cx="416.5" cy="757.3" r="42" fill="url(#orbg)" opacity="0.85"/>
<circle cx="418" cy="758" r="44" fill="none" stroke="#5f7a70" stroke-width="1.2" opacity="0.8"/>
<ellipse cx="420" cy="757" rx="36" ry="44" fill="none" stroke="#8aa89c" stroke-width="1" opacity="0.55" transform="rotate(-15 420 757)"/>
<ellipse cx="418" cy="757" rx="13" ry="40" fill="none" stroke="#9cc8b4" stroke-width="1.3" opacity="0.7" transform="rotate(30 418 757)"/>
<ellipse cx="412" cy="760" rx="26" ry="36" fill="none" stroke="#7aa894" stroke-width="1" opacity="0.5" transform="rotate(-25 412 760)"/>
<rect x="372" y="755.8" width="91" height="3" fill="#b8c8c0" opacity="0.55"/>
<circle cx="416.5" cy="757.3" r="19" fill="#c8ffe0" opacity="0.55" filter="url(#blur1)"/>
<circle cx="416.5" cy="757.3" r="12.5" fill="#ffffff" filter="url(#blur1)"/>
<!-- buttons -->
<rect x="413.8" y="712" width="15.2" height="15" fill="#ede4c8"/>
<rect x="417" y="722" width="9" height="1.6" fill="#7a705a"/>
<rect x="440.6" y="712" width="16.3" height="15" fill="#ede4c8"/>
<path d="M444 715 L453 724 M453 715 L444 724" stroke="#7a705a" stroke-width="1.6"/>
<path d="M463.3 751.4 H494.8 V782 H467 L463.3 778 Z" fill="#ede4c8"/>
<path d="M469 769 L478 758 M471 771 L480 760" stroke="#2a2a2a" stroke-width="1.6"/>
<rect x="476" y="763.5" width="12.5" height="13" fill="none" stroke="#2a2a2a" stroke-width="1.6"/>
<rect x="257.5" y="953.8" width="40" height="36.2" fill="#ede4c8"/>
<rect x="262" y="958" width="31" height="28" rx="3" fill="none" stroke="#1c1c1c" stroke-width="2.5"/>
<path d="M267 980 L288 962 M267 980 H273 M267 980 V974 M288 962 H282 M288 962 V968" stroke="#1c1c1c" stroke-width="2.6" fill="none"/>
<!-- little particles below -->
<g fill="#8ad0e0"><rect x="294" y="1020" width="2" height="4"/><rect x="286" y="1033" width="1.5" height="3"/><rect x="306" y="1034" width="2" height="4"/><rect x="351" y="1043" width="2" height="4"/><rect x="361" y="1045" width="1.5" height="4"/><rect x="266" y="1040" width="1.5" height="3"/><rect x="380" y="1054" width="1.5" height="3"/><rect x="345" y="1066" width="2" height="4"/><rect x="406" y="982" width="1.5" height="4"/></g>
</svg>

</body></html>
